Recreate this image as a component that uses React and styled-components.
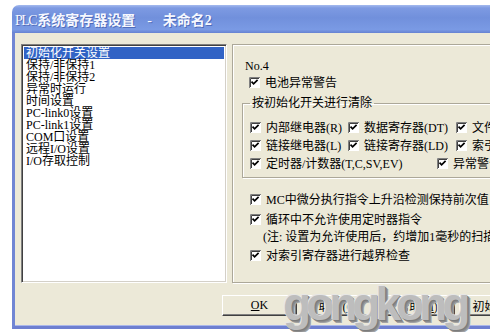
import React from 'react';
import styled, { createGlobalStyle } from 'styled-components';

const Global = createGlobalStyle`
  html, body { margin: 0; padding: 0; background: #ffffff; }
  body { width: 490px; height: 332px; overflow: hidden; }
  #root { width: 490px; height: 332px; overflow: hidden; }
`;

const FONT = `"Liberation Serif", "Noto Sans CJK SC", serif`;

const Desktop = styled.div`
  width: 490px;
  height: 332px;
  padding: 5px 0 0 12px;
  box-sizing: border-box;
  overflow: hidden;
  font-family: ${FONT};
  font-size: 12px;
  color: #000;
`;

const Window = styled.div`
  position: relative;
  width: 560px;
  display: flex;
  flex-direction: column;
`;

const TitleBar = styled.div`
  height: 28px;
  box-sizing: border-box;
  border-radius: 7px 7px 0 0;
  background: linear-gradient(#a5baee 0px, #7d9ae2 3px, #7190dc 45%, #7a9ae4 88%, #6682d2 100%);
  display: flex;
  align-items: center;
  padding: 3px 0 0 3px;
`;

const Title = styled.div`
  font-family: ${FONT};
  font-size: 14px;
  font-weight: bold;
  color: #f6f8ff;
  text-shadow: 1px 1px 0 rgba(45, 70, 150, 0.55);
  white-space: nowrap;
  line-height: 16px;
`;

const TitleLatin = styled.span`
  font-size: 14px;
  font-weight: normal;
  letter-spacing: -1.5px;
  margin-right: 1px;
`;

const TitleSep = styled.span`
  margin: 0 11px 0 12px;
  font-weight: normal;
`;

const Frame = styled.div`
  background: #ece9d8;
  border-left: 3px solid #7186d4;
  border-bottom: 3px solid #6d7fd0;
  box-shadow: inset 0 -1px 0 #a9b6ea;
  padding: 11px 0 10px 6px;
  display: flex;
  flex-direction: column;
`;

const Main = styled.div`
  display: grid;
  grid-template-columns: 206px 1fr;
  column-gap: 5px;
  height: 239px;
`;

const ListBox = styled.div`
  background: #fff;
  border-style: solid;
  border-width: 1px;
  border-color: #808080 #ffffff #ffffff #808080;
  box-shadow: inset 1px 1px 0 #404040, inset -1px -1px 0 #d4d0c8;
  padding: 2px 2px 0 2px;
  box-sizing: border-box;
  display: flex;
  flex-direction: column;
`;

const ListItem = styled.div`
  height: 12px;
  line-height: 12px;
  padding-left: 2px;
  white-space: nowrap;
  background: ${p => (p.$selected ? '#3163c5' : 'transparent')};
  color: ${p => (p.$selected ? '#fff' : '#000')};
`;

const Panel = styled.div`
  border-style: solid;
  border-width: 1px;
  border-color: #aca899;
  box-shadow: inset 1px 1px 0 #fff, 1px 1px 0 #fff;
  padding: 14px 0 0 9px;
  box-sizing: border-box;
  display: flex;
  flex-direction: column;
  white-space: nowrap;
`;

const NoLabel = styled.div`
  height: 14px;
  line-height: 14px;
  margin-left: 3px;
`;

const CheckRow = styled.div`
  display: flex;
  align-items: center;
  gap: 5px;
  height: 18px;
  margin-left: ${p => p.$indent || 0}px;
  margin-bottom: ${p => p.$after || 0}px;
  width: ${p => (p.$w ? `${p.$w}px` : 'auto')};
  flex: none;
`;

const Note = styled.div`
  height: 18px;
  line-height: 18px;
  margin-left: 21px;
`;

const Group = styled.fieldset`
  margin: 5px 0 12px 0;
  padding: 0 7px 5px 7px;
  border: 1px solid #aca899;
  box-shadow: inset 1px 1px 0 #fff, 1px 1px 0 #fff;
  min-width: 0;
`;

const Legend = styled.legend`
  padding: 0 2px;
  line-height: 14px;
  font-size: 12px;
`;

const GroupBody = styled.div`
  padding-top: 8px;
  display: flex;
  flex-direction: column;
`;

const GroupRow = styled.div`
  display: flex;
`;

const Box = styled.span`
  display: inline-flex;
  width: 11px;
  height: 11px;
  flex: none;
`;

const ButtonRow = styled.div`
  display: flex;
  gap: 4px;
  margin-top: 12px;
  padding-left: 201px;
`;

const Button = styled.button`
  width: 75px;
  height: 21px;
  flex: none;
  font-family: ${FONT};
  font-size: 12px;
  color: #000;
  background: #ece9d8;
  border-style: solid;
  border-width: 1px;
  border-color: #ffffff #404040 #404040 #ffffff;
  box-shadow: inset -1px -1px 0 #808080;
  padding: 0;
  white-space: nowrap;
`;

const Watermark = styled.div`
  position: absolute;
  left: 271px;
  top: 276px;
  font-family: "Liberation Sans", sans-serif;
  font-weight: bold;
  font-size: 46px;
  line-height: 46px;
  letter-spacing: -5px;
  color: #bdbdbd;
  text-shadow: -1px -1px 0 #e6e6e6, 1px 1px 0 #7c7c7c, 2px 2px 0 #8a8a8a, 3px 3px 0 #a2a2a2;
  pointer-events: none;
`;

function Check() {
  return (
    <Box>
      <svg width="11" height="11" viewBox="0 0 11 11">
        <rect x="0" y="0" width="11" height="11" fill="#fff" />
        <path d="M0.5 11 V0.5 H11" stroke="#808080" fill="none" />
        <path d="M1.5 10 V1.5 H10" stroke="#404040" fill="none" />
        <path d="M2.5 4.6 L4.6 6.8 L8.6 2.8" stroke="#000" strokeWidth="1.7" fill="none" />
      </svg>
    </Box>
  );
}

function Item({ children, indent, after, w }) {
  return (
    <CheckRow $indent={indent} $after={after} $w={w}>
      <Check />
      <span>{children}</span>
    </CheckRow>
  );
}

const listItems = [
  '初始化开关设置',
  '保持/非保持1',
  '保持/非保持2',
  '异常时运行',
  '时间设置',
  'PC-link0设置',
  'PC-link1设置',
  'COM口设置',
  '远程I/O设置',
  'I/O存取控制',
];

export default function App() {
  return (
    <>
      <Global />
      <Desktop>
        <Window>
          <TitleBar>
            <Title>
              <TitleLatin>PLC</TitleLatin>系统寄存器设置<TitleSep>-</TitleSep>未命名2
            </Title>
          </TitleBar>
          <Frame>
            <Main>
              <ListBox>
                {listItems.map((t, i) => (
                  <ListItem key={t} $selected={i === 0}>{t}</ListItem>
                ))}
              </ListBox>
              <Panel>
                <NoLabel>No.4</NoLabel>
                <Item indent={7}>电池异常警告</Item>
                <Group>
                  <Legend>按初始化开关进行清除</Legend>
                  <GroupBody>
                    <GroupRow>
                      <Item w={98}>内部继电器(R)</Item>
                      <Item w={108}>数据寄存器(DT)</Item>
                      <Item>文件寄存器(FL)</Item>
                    </GroupRow>
                    <GroupRow>
                      <Item w={98}>链接继电器(L)</Item>
                      <Item w={108}>链接寄存器(LD)</Item>
                      <Item>索引寄存器(I)</Item>
                    </GroupRow>
                    <GroupRow>
                      <Item w={187}>定时器/计数器(T,C,SV,EV)</Item>
                      <Item>异常警告</Item>
                    </GroupRow>
                  </GroupBody>
                </Group>
                <Item indent={8} after={2}>MC中微分执行指令上升沿检测保持前次值</Item>
                <Item indent={8}>循环中不允许使用定时器指令</Item>
                <Note>(注: 设置为允许使用后，约增加1毫秒的扫描时间)</Note>
                <Item indent={8}>对索引寄存器进行越界检查</Item>
              </Panel>
            </Main>
            <ButtonRow>
              <Button><u>O</u>K</Button>
              <Button>取消(<u>C</u>)</Button>
              <Button>帮助(<u>H</u>)</Button>
              <Button>初始化(<u>I</u>)</Button>
            </ButtonRow>
          </Frame>
          <Watermark>gongkong</Watermark>
        </Window>
      </Desktop>
    </>
  );
}
